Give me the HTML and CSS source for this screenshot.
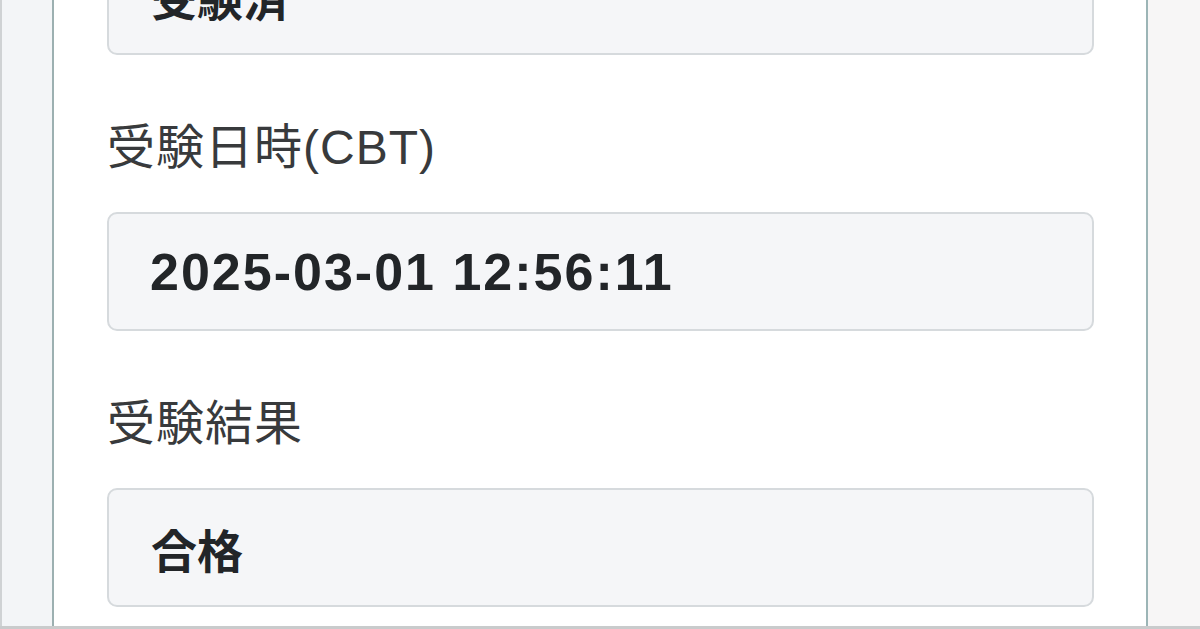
FILE: index.html
```html
<!DOCTYPE html>
<html lang="ja">
<head>
<meta charset="utf-8">
<title>受験情報</title>
<link rel="stylesheet" href="styles.css">
</head>
<body>
<div class="page">
  <div class="side side-left"></div>
  <main class="card">
    <div class="field field-first">
      <div class="control control-ja">受験済</div>
    </div>
    <div class="field">
      <label class="label">受験日時(CBT)</label>
      <div class="control">2025-03-01 12:56:11</div>
    </div>
    <div class="field">
      <label class="label">受験結果</label>
      <div class="control control-ja">合格</div>
    </div>
  </main>
  <div class="side side-right"></div>
</div>
</body>
</html>
```
FILE: styles.css
```css
* { box-sizing: border-box; }
html, body { margin: 0; padding: 0; background: #ffffff; }
body {
  font-family: "Liberation Sans", "Noto Sans CJK JP", sans-serif;
  width: 1200px;
  height: 629px;
  overflow: hidden;
}
.page {
  display: flex;
  width: 1200px;
  height: 629px;
  overflow: hidden;
  border-bottom: 3px solid #c9cbcc;
}
.side { flex: 0 0 auto; }
.side-left {
  width: 52px;
  background: #f3f5f7;
  border-left: 2px solid #cfd2d4;
}
.side-right {
  width: 52px;
  background: #f7f6f6;
}
.card {
  flex: 1 1 auto;
  background: #ffffff;
  border-left: 2px solid #9cb0b1;
  border-right: 2px solid #9cb5b6;
  padding: 0 52px 0 53px;
  display: flex;
  flex-direction: column;
}
.field {
  display: flex;
  flex-direction: column;
  margin-bottom: 58px;
}
.field-first { margin-top: -64px; }
.label {
  font-family: "Liberation Sans", "Noto Sans CJK JP", sans-serif;
  font-size: 48px;
  line-height: 70px;
  letter-spacing: 1px;
  color: #383a3c;
  margin-bottom: 29px;
}
.control {
  height: 119px;
  border: 2px solid #d6dadd;
  border-radius: 10px;
  background: #f5f6f8;
  display: flex;
  align-items: center;
  padding-left: 41px;
  font-family: "Liberation Sans", "Noto Sans CJK JP", sans-serif;
  font-weight: 700;
  font-size: 52px;
  letter-spacing: 2px;
  color: #222528;
}
.control-ja {
  font-size: 46px;
  letter-spacing: 0;
  padding-left: 42px;
}
```
